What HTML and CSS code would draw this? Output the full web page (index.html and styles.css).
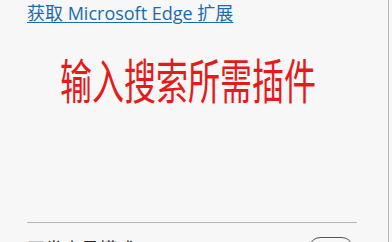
FILE: index.html
```html
<!DOCTYPE html>
<html lang="zh-CN">
<head>
<meta charset="utf-8">
<link rel="stylesheet" href="styles.css">
</head>
<body>
<div class="panel">
  <a class="link" href="#">获取 Microsoft Edge 扩展</a>
  <div class="note">输入搜索所需插件</div>
  <div class="sep"></div>
  <div class="row">
    <span class="label">开发人员模式</span>
    <span class="toggle"></span>
  </div>
</div>
</body>
</html>
```
FILE: styles.css
```css
html, body {
  margin: 0;
  padding: 0;
  width: 392px;
  height: 242px;
  overflow: hidden;
  background: #f7f7f7;
}
.panel {
  width: 389px;
  height: 242px;
  overflow: hidden;
  border-right: 1px solid #b8b8b8;
  padding: 0 0 0 27px;
  box-sizing: border-box;
  font-family: "Open Sans", "Noto Sans CJK SC", sans-serif;
}
.link {
  display: inline-block;
  margin-top: 1px;
  font-size: 18px;
  line-height: 24px;
  color: #1b6cad;
  text-decoration: underline;
  text-underline-offset: 2px;
  text-decoration-thickness: 1px;
}
.note {
  margin-top: 27px;
  margin-left: 33px;
  font-family: "Noto Sans CJK SC", sans-serif;
  font-size: 32px;
  line-height: 34px;
  color: #e31b1b;
  transform: scaleY(1.5);
  transform-origin: left top;
  height: 51px;
}
.sep {
  margin-top: 119px;
  width: 330px;
  height: 1px;
  background: #b4b4b4;
}
.row {
  display: flex;
  justify-content: space-between;
  align-items: flex-start;
  width: 326px;
  margin-top: 14px;
}
.label {
  font-family: "Noto Sans CJK SC", sans-serif;
  font-size: 18px;
  line-height: 22px;
  color: #222;
}
.toggle {
  flex: none;
  width: 42px;
  height: 20px;
  border: 1px solid #555;
  border-radius: 11px;
}
```
